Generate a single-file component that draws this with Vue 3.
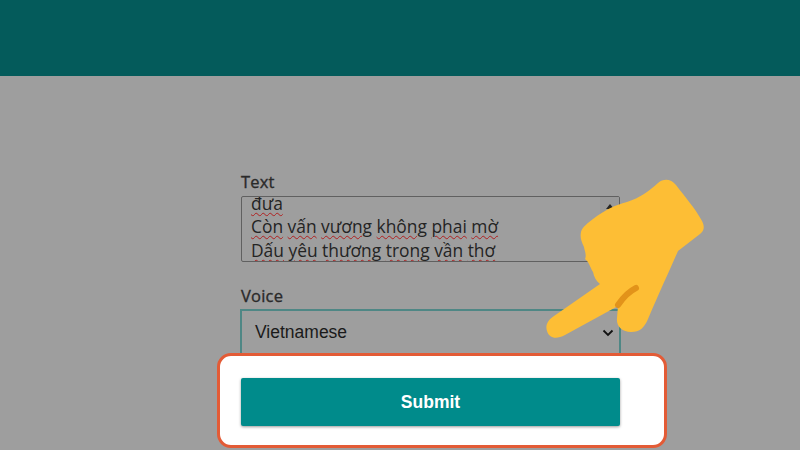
<script setup>
const lines = [
  ['đưa'],
  ['Còn', 'vấn', 'vương', 'không', 'phai', 'mờ'],
  ['Dấu', 'yêu', 'thương', 'trong', 'vần', 'thơ']
]
</script>

<template>
  <div class="page">
    <header class="top"></header>
    <main class="form">
      <label class="label">Text</label>
      <div class="textarea">
        <div class="text">
          <div v-for="(line, i) in lines" :key="i" class="line">
            <span v-for="(word, j) in line" :key="j" class="word">{{ word }}</span>
          </div>
        </div>
        <div class="scroll"><span class="up"></span></div>
      </div>
      <label class="label voice">Voice</label>
      <div class="select">
        <span>Vietnamese</span>
        <svg class="chev" width="12" height="8" viewBox="0 0 12 8"><path d="M1.5 1.5 6 6l4.5-4.5" fill="none" stroke="#111" stroke-width="1.8"/></svg>
      </div>
      <div class="submit-wrap">
        <div class="highlight"></div>
        <button class="submit">Submit</button>
      </div>
    </main>
    <svg class="hand" viewBox="0 0 800 450" width="800" height="450">
      <path fill="#fdbe35" d="M658 183C664 178 671 179 676 185C685 197 695 208 702 221C705 227 704 231 700 234L678 251C671 267 660 291 648 319C644 328 640 332 631 332C622 332 616 326 617 318L618 306L565 335C556 340 549 338 547 331C545 325 548 320 554 316L600 284C596 281 594 277 593 272C590 267 589 262 585 259C587 255 584 249 584 247C581 241 580 237 581 232C582 227 588 223 593 219C605 210 615 205 627 202C640 198 649 191 658 183Z"/>
      <path fill="none" stroke="#e2931a" stroke-width="6" stroke-linecap="round" d="M636 288C628 292 622 299 618 305"/>
    </svg>
  </div>
</template>

<style>
html, body { margin: 0; background: #9e9e9e; }
</style>

<style scoped>
.page { position: relative; width: 800px; height: 450px; overflow: hidden; background: #9e9e9e; font-family: "Open Sans", sans-serif; color: #262626; }
.top { height: 76px; background: #045b5b; }
.form { width: 379px; margin-left: 241px; padding-top: 94px; display: flex; flex-direction: column; }
.label { font-size: 16.5px; line-height: 24px; font-weight: 500; letter-spacing: 0.2px; color: #2a2a2a; -webkit-text-stroke: 0.35px #2a2a2a; }
.textarea { height: 64px; margin-top: 2px; border: 1px solid #606060; border-radius: 2px; display: flex; overflow: hidden; }
.text { flex: 1; display: flex; flex-direction: column; justify-content: flex-end; padding: 0 0 0 9px; overflow: hidden; font-size: 17.4px; line-height: 23.5px; color: #242424; }
.line { display: flex; gap: 4.5px; flex: none; transform: translateY(1px); }
.word { text-decoration: underline wavy #b02020 1px; text-underline-offset: 1.5px; }
.scroll { width: 19px; background: #999; display: flex; justify-content: center; }
.up { width: 0; height: 0; margin-top: 7px; border-left: 4px solid transparent; border-right: 4px solid transparent; border-bottom: 5px solid #262626; }
.voice { margin-top: 22px; }
.select { margin: 1px -1px 0; height: 46px; box-sizing: border-box; border: 2px solid #4f8785; display: flex; align-items: center; justify-content: space-between; padding: 1px 5px 0 13px; font-family: "Liberation Sans", sans-serif; font-size: 17.5px; color: #1a1a1a; }
.submit-wrap { position: relative; margin-top: 23px; }
.highlight { position: absolute; left: -24px; right: -47px; top: -25px; bottom: -22px; box-sizing: border-box; background: #fff; border: 3px solid #e35b36; border-radius: 14px; }
.submit { position: relative; display: block; width: 100%; height: 48px; border: 0; border-radius: 2px; background: #008b8b; color: #fff; font-family: "Liberation Sans", sans-serif; font-size: 17.5px; font-weight: 700; box-shadow: 0 1px 3px rgba(0,0,0,.4); }
.hand { position: absolute; left: 0; top: 0; pointer-events: none; }
</style>
